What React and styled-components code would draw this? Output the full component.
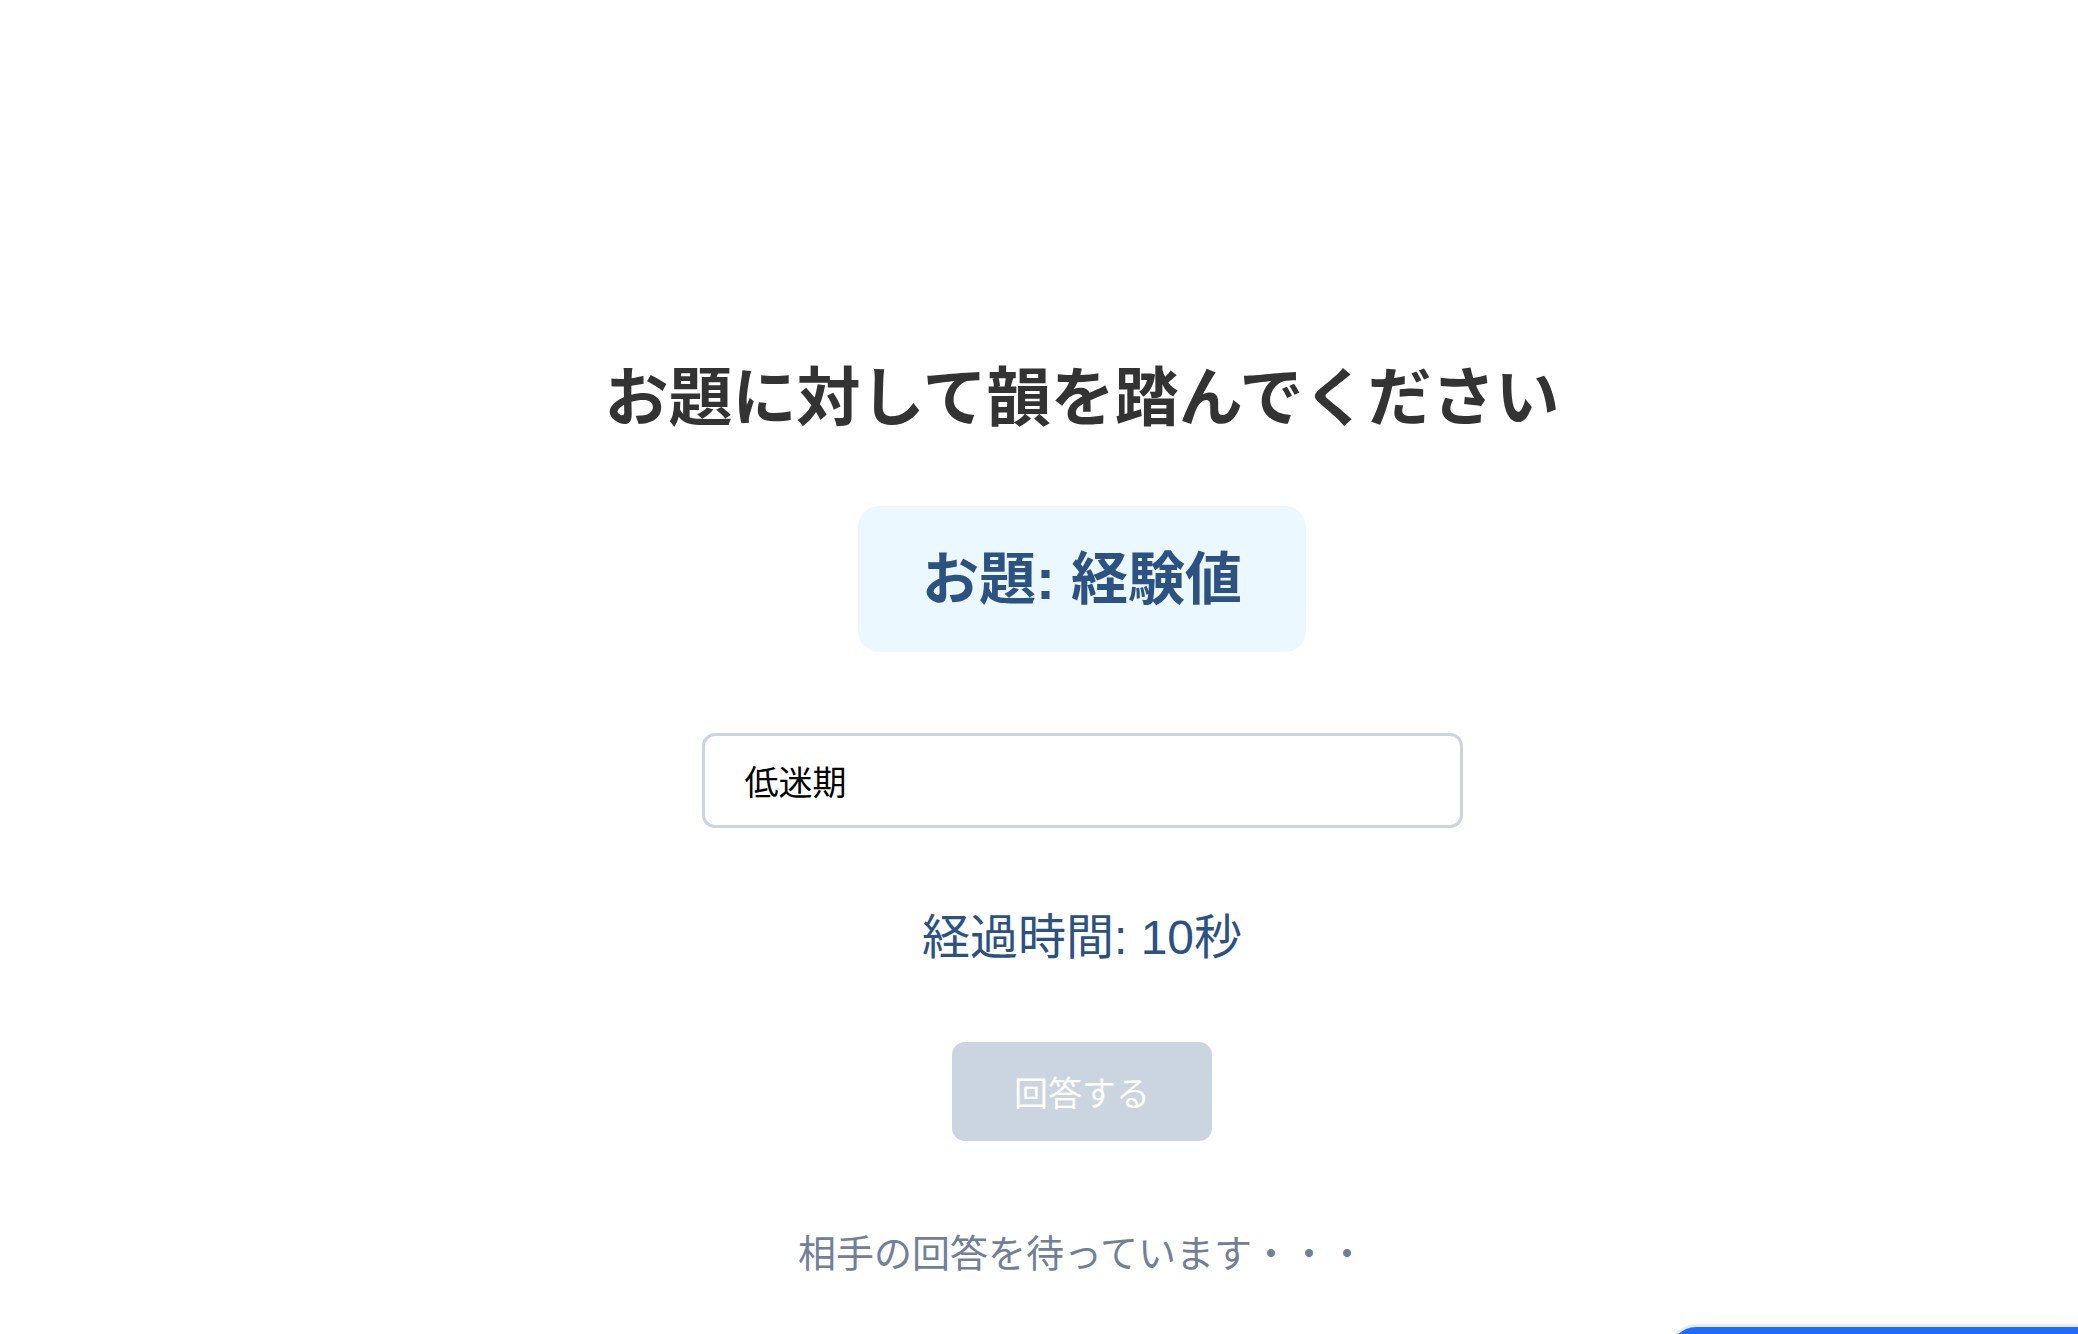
import React from "react";
import styled, { createGlobalStyle } from "styled-components";

const GlobalStyle = createGlobalStyle`
  html, body {
    margin: 0;
    padding: 0;
    background: #ffffff;
  }
  body {
    font-family: "Liberation Sans", "Noto Sans CJK JP", sans-serif;
    overflow: hidden;
  }
`;

const Page = styled.main`
  min-height: 1334px;
  box-sizing: border-box;
  padding: 350px 0 0 86px;
  display: flex;
  flex-direction: column;
  align-items: center;
`;

const Title = styled.h1`
  margin: 0;
  font-size: 64px;
  line-height: 96px;
  font-weight: 700;
  color: #333333;
`;

const TopicCard = styled.div`
  margin-top: 60px;
  padding: 40px 64px;
  background: #ebf8ff;
  border-radius: 21px;
  font-size: 57px;
  line-height: 66px;
  font-weight: 700;
  color: #2c5282;
`;

const AnswerInput = styled.input`
  margin-top: 81px;
  width: 761px;
  height: 95px;
  box-sizing: border-box;
  padding: 0 40px;
  border: 3px solid #cbd5e0;
  border-radius: 13px;
  font-family: "Noto Sans CJK JP", sans-serif;
  font-size: 34px;
  color: #000000;
  background: #ffffff;
  outline: none;
`;

const Timer = styled.p`
  margin: 74px 0 0;
  font-size: 48px;
  line-height: 72px;
  color: #2c5282;
`;

const SubmitButton = styled.button`
  margin-top: 68px;
  width: 260px;
  height: 99px;
  border: none;
  border-radius: 13px;
  background: #cbd5e0;
  color: #ffffff;
  font-family: "Liberation Sans", "Noto Sans CJK JP", sans-serif;
  font-size: 34px;
  cursor: not-allowed;
`;

const Waiting = styled.p`
  margin: 85px 0 0;
  font-size: 38px;
  line-height: 57px;
  color: #718096;
`;

const Toast = styled.div`
  position: fixed;
  left: 1670px;
  top: 1327px;
  width: 520px;
  height: 90px;
  border-radius: 26px;
  background: #1d6bff;
  box-shadow: 0 -1px 0 2px rgba(0, 0, 0, 0.08);
`;

export default function App() {
  return (
    <>
      <GlobalStyle />
      <Page>
        <Title>お題に対して韻を踏んでください</Title>
        <TopicCard>お題: 経験値</TopicCard>
        <AnswerInput type="text" defaultValue="低迷期" readOnly />
        <Timer>経過時間: 10秒</Timer>
        <SubmitButton disabled>回答する</SubmitButton>
        <Waiting>相手の回答を待っています・・・</Waiting>
      </Page>
      <Toast />
    </>
  );
}
